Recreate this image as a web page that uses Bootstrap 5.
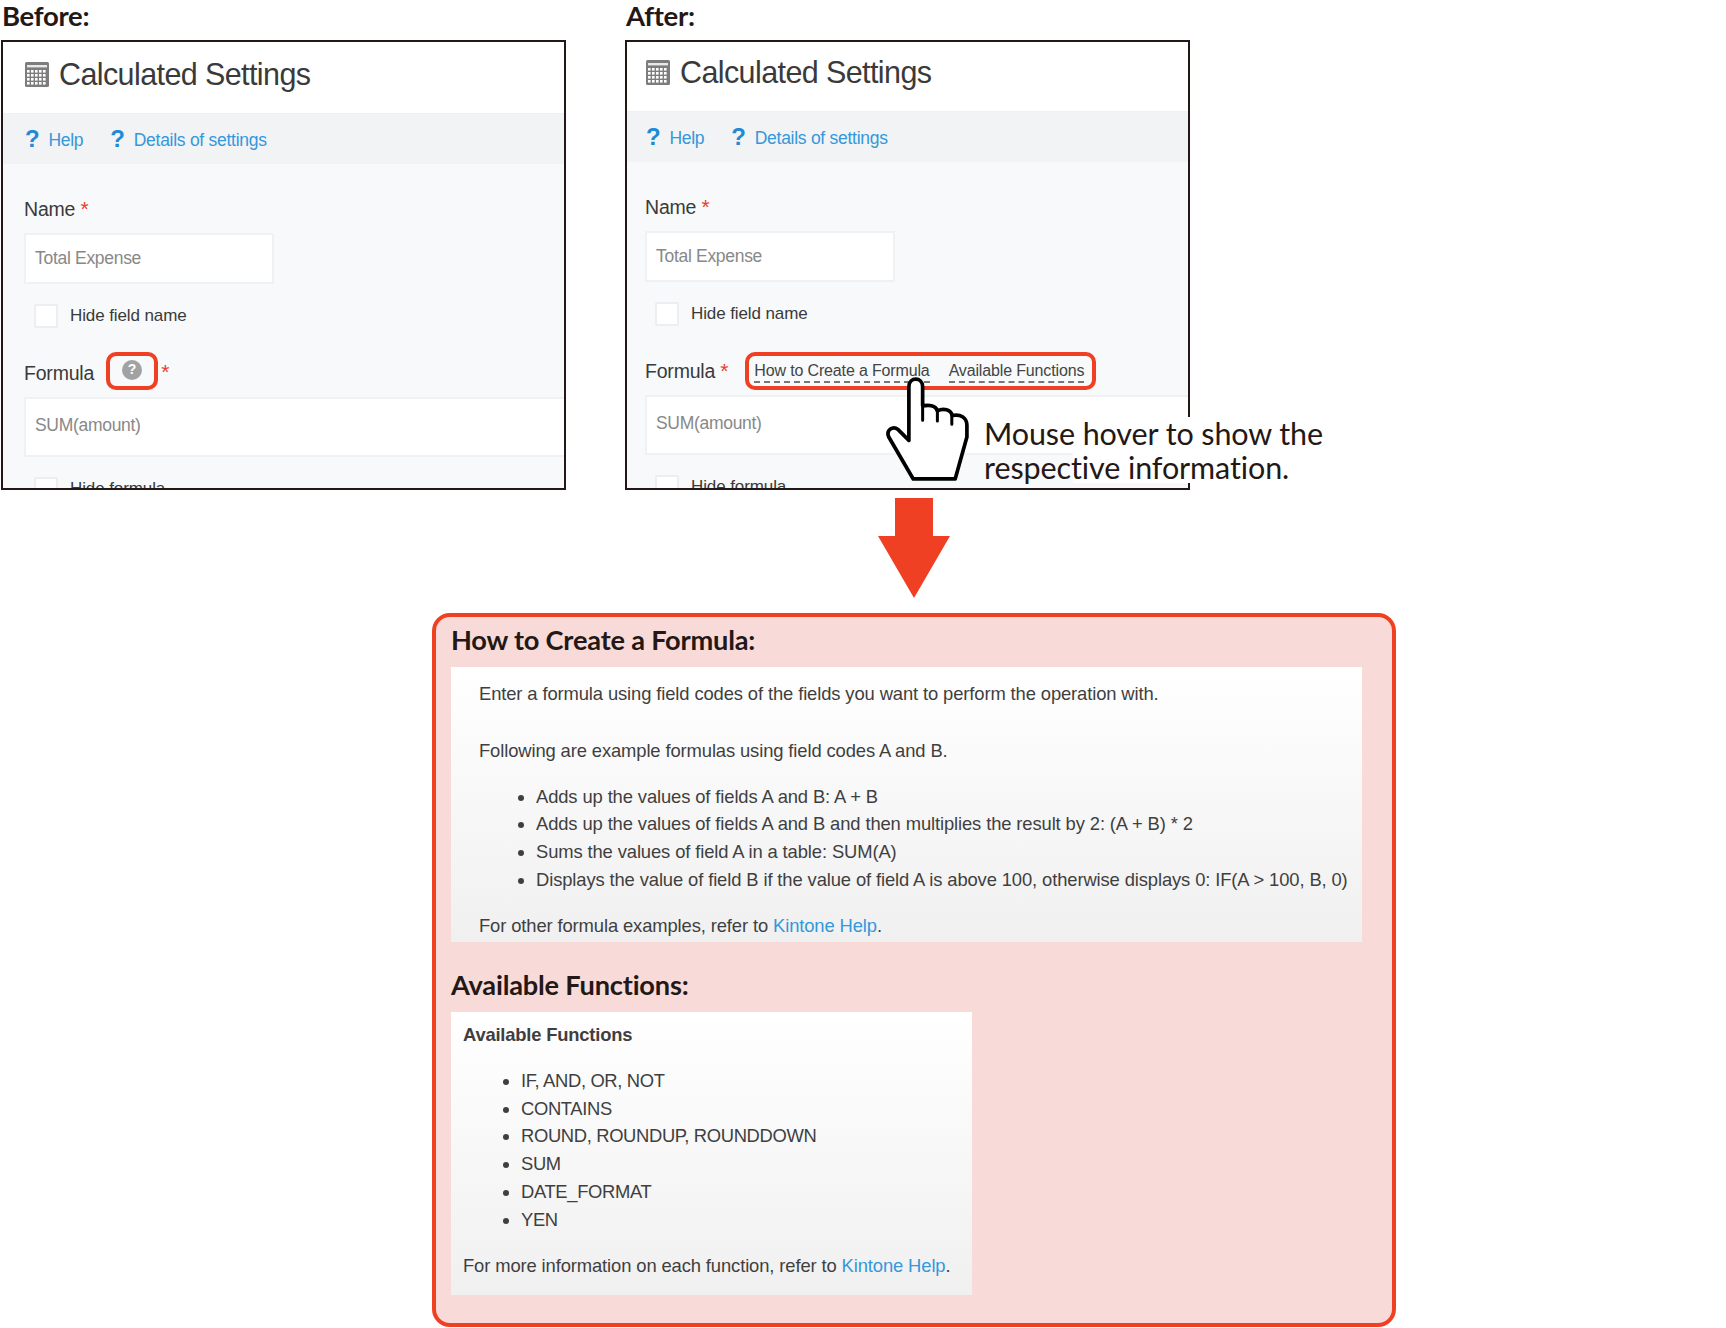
<!DOCTYPE html>
<html lang="en">
<head>
<meta charset="utf-8">
<title>Calculated Settings</title>
<link href="https://cdn.jsdelivr.net/npm/bootstrap@5.3.0/dist/css/bootstrap.min.css" rel="stylesheet">
<style>
html,body{background:#fff;margin:0;}
body{font-family:"Liberation Sans",Arial,sans-serif;color:#333;}
.stage{width:1726px;height:1328px;position:relative;overflow:hidden;}
.top-row{padding-left:1px;gap:59px;}
.shot-col{width:565px;position:relative;}
.shot-label{font-family:Lato,sans-serif;font-weight:700;font-size:27.5px;line-height:32px;height:40px;margin:0;padding-left:1px;color:#231815;letter-spacing:-.3px;}
.pane{border:2px solid #231815;height:450px;overflow:hidden;background:#f7f9fb;}
.pane-head{height:71px;background:#fff;padding:0 0 6px 22px;gap:10px;font-size:30.5px;color:#3a3a3a;letter-spacing:-.6px;}
.after-col .pane-head{height:69px;padding-left:19px;padding-bottom:8px;}
.pane-links{height:51px;background:#f2f3f5;padding:2px 0 0 22px;gap:27px;font-size:17.5px;border-top:1px solid #eef0f2;}
.after-col .pane-links{padding-left:19px;}
.pane-links a{color:#3498db;text-decoration:none;letter-spacing:-.27px;}
.q-mark{color:#1f8ad6;font-weight:700;font-size:24px;margin-right:9px;line-height:20px;vertical-align:-1px;}
.pane-body{padding:32px 0 0 21px;}
.after-col .pane-body{padding-left:18px;}
.field-label{font-size:19.5px;line-height:26px;height:26px;letter-spacing:-.2px;color:#3a3a3a;}
.req{color:#e8402a;font-size:21px;}
.fake-input{background:#fff;border:2px solid #f0f1f3;color:#888;font-size:17.5px;letter-spacing:-.3px;padding:0 0 0 9px;border-radius:0;}
.input-name{width:250px;height:51px;margin-top:11px;}
.input-formula{height:60px;width:560px;margin-top:5px;padding-bottom:3px;}
.check-row{margin:20px 0 0 10px;height:24px;gap:12px;font-size:17px;letter-spacing:-.1px;color:#3a3a3a;}
.check-box{width:24px;height:24px;background:#fff;border:2px solid #eceef1;border-radius:2px;}
.formula-row{margin-top:24px;height:40px;}
.formula-row .field-label{margin-top:2px;}
.outline-red{border:4px solid #f04023;border-radius:10px;}
.help-box{width:52px;height:38px;margin:-2px 3px 0 12px;}
.help-dot{width:20px;height:20px;background:#a2a2a2;color:#fff;font-weight:700;font-size:14px;margin-top:-3px;}
.hint-box{width:351px;height:38px;margin:2px 0 0 17px;padding-left:5px;gap:19px;font-size:16px;letter-spacing:-.15px;color:#444;white-space:nowrap;}
.hint-box span{border-bottom:2px dashed #777;line-height:21px;}
.hand{position:absolute;left:258px;top:375px;width:89px;height:109px;}
.note-patch{position:absolute;left:448px;top:417px;width:270px;height:66px;background:#fff;}
.note-text{position:absolute;left:359px;top:417px;font-family:Lato,sans-serif;font-size:30.5px;line-height:33.5px;color:#231815;white-space:nowrap;letter-spacing:-.1px;}
.down-arrow{display:block;margin:8px 0 0 878px;width:72px;height:100px;}
.info-box{width:964px;height:714px;margin:15px 0 0 432px;border:4px solid #f04023;border-radius:18px;background:#f8dbd8;padding:4px 0 0 15px;}
.info-title{font-family:Lato,sans-serif;font-weight:700;font-size:27.2px;line-height:38px;margin:0 0 8px;color:#231815;letter-spacing:-.2px;}
.doc-card{background:linear-gradient(#fff,#f0f0f1);font-size:18.4px;line-height:27.8px;color:#3f3f3f;letter-spacing:-.12px;}
.doc-card a{color:#3498db;text-decoration:none;}
.doc-card ul{margin:18px 0;padding-left:57px;}
.doc-card p{margin:0;}
.doc-one{width:911px;height:275px;padding:13px 0 0 28px;margin-bottom:24px;}
.doc-one .gap-line{margin-top:29px;}
.doc-two{width:521px;height:283px;padding:9px 0 0 12px;}
.doc-two ul{padding-left:58px;letter-spacing:-.35px;}
.doc-two .fw-bold{letter-spacing:-.2px;}
</style>
</head>
<body>
<div class="stage">
  <div class="d-flex top-row">
    <section class="shot-col">
      <h2 class="shot-label">Before:</h2>
      <div class="pane">
        <div class="pane-head d-flex align-items-center">
          <svg width="24" height="25" viewBox="0 0 24 25" aria-hidden="true"><defs><pattern id="k1" width="4" height="4" patternUnits="userSpaceOnUse" x="2" y="8"><rect width="2.6" height="2.6" fill="#fff"/></pattern></defs><rect width="24" height="25" rx="1.5" fill="#7d7d7d"/><rect x="2" y="3" width="20" height="2.4" fill="#e9e9e9"/><rect x="2" y="8" width="20" height="15" fill="url(#k1)"/></svg>
          <span>Calculated Settings</span>
        </div>
        <div class="pane-links d-flex align-items-center">
          <a href="#"><span class="q-mark">?</span>Help</a>
          <a href="#"><span class="q-mark">?</span>Details of settings</a>
        </div>
        <div class="pane-body">
          <div class="field-label">Name <span class="req">*</span></div>
          <div class="fake-input input-name d-flex align-items-center">Total Expense</div>
          <div class="check-row d-flex align-items-center"><span class="check-box"></span><span>Hide field name</span></div>
          <div class="formula-row d-flex align-items-center">
            <span class="field-label">Formula</span>
            <span class="outline-red help-box d-flex align-items-center justify-content-center"><span class="help-dot rounded-circle d-flex align-items-center justify-content-center">?</span></span>
            <span class="req">*</span>
          </div>
          <div class="fake-input input-formula d-flex align-items-center">SUM(amount)</div>
          <div class="check-row d-flex align-items-center"><span class="check-box"></span><span>Hide formula</span></div>
        </div>
      </div>
    </section>
    <section class="shot-col after-col">
      <h2 class="shot-label">After:</h2>
      <div class="pane">
        <div class="pane-head d-flex align-items-center">
          <svg width="24" height="25" viewBox="0 0 24 25" aria-hidden="true"><defs><pattern id="k2" width="4" height="4" patternUnits="userSpaceOnUse" x="2" y="8"><rect width="2.6" height="2.6" fill="#fff"/></pattern></defs><rect width="24" height="25" rx="1.5" fill="#7d7d7d"/><rect x="2" y="3" width="20" height="2.4" fill="#e9e9e9"/><rect x="2" y="8" width="20" height="15" fill="url(#k2)"/></svg>
          <span>Calculated Settings</span>
        </div>
        <div class="pane-links d-flex align-items-center">
          <a href="#"><span class="q-mark">?</span>Help</a>
          <a href="#"><span class="q-mark">?</span>Details of settings</a>
        </div>
        <div class="pane-body">
          <div class="field-label">Name <span class="req">*</span></div>
          <div class="fake-input input-name d-flex align-items-center">Total Expense</div>
          <div class="check-row d-flex align-items-center"><span class="check-box"></span><span>Hide field name</span></div>
          <div class="formula-row d-flex align-items-center">
            <span class="field-label">Formula <span class="req">*</span></span>
            <span class="outline-red hint-box d-flex align-items-center"><span>How to Create a Formula</span><span>Available Functions</span></span>
          </div>
          <div class="fake-input input-formula d-flex align-items-center">SUM(amount)</div>
          <div class="check-row d-flex align-items-center"><span class="check-box"></span><span>Hide formula</span></div>
        </div>
      </div>
      <div class="note-patch"></div>
      <svg class="hand" viewBox="70 105 265 325" aria-hidden="true"><path d="M147 300V140C147 110 188 110 188 140V197C210 193 228 198 232 212C250 203 272 208 276 226C300 220 320 232 320 255V290L285 415H160L87 290C78 268 100 255 115 268Z" fill="#fff" stroke="#000" stroke-width="11" stroke-linejoin="round"/><path d="M188 197V240M232 212V242M275 226V252" fill="none" stroke="#000" stroke-width="9" stroke-linecap="round"/></svg>
      <div class="note-text">Mouse hover to show the<br>respective information.</div>
    </section>
  </div>
  <svg class="down-arrow" viewBox="0 0 72 100" aria-hidden="true"><path d="M17 0H55V38H72L36 100L0 38H17Z" fill="#f04023"/></svg>
  <div class="info-box">
    <h3 class="info-title">How to Create a Formula:</h3>
    <div class="doc-card doc-one">
      <p>Enter a formula using field codes of the fields you want to perform the operation with.</p>
      <p class="gap-line">Following are example formulas using field codes A and B.</p>
      <ul>
        <li>Adds up the values of fields A and B: A + B</li>
        <li>Adds up the values of fields A and B and then multiplies the result by 2: (A + B) * 2</li>
        <li>Sums the values of field A in a table: SUM(A)</li>
        <li>Displays the value of field B if the value of field A is above 100, otherwise displays 0: IF(A &gt; 100, B, 0)</li>
      </ul>
      <p>For other formula examples, refer to <a href="#">Kintone Help</a>.</p>
    </div>
    <h3 class="info-title">Available Functions:</h3>
    <div class="doc-card doc-two">
      <p class="fw-bold">Available Functions</p>
      <ul>
        <li>IF, AND, OR, NOT</li>
        <li>CONTAINS</li>
        <li>ROUND, ROUNDUP, ROUNDDOWN</li>
        <li>SUM</li>
        <li>DATE_FORMAT</li>
        <li>YEN</li>
      </ul>
      <p>For more information on each function, refer to <a href="#">Kintone Help</a>.</p>
    </div>
  </div>
</div>
<script src="https://cdn.jsdelivr.net/npm/bootstrap@5.3.0/dist/js/bootstrap.bundle.min.js"></script>
</body>
</html>
